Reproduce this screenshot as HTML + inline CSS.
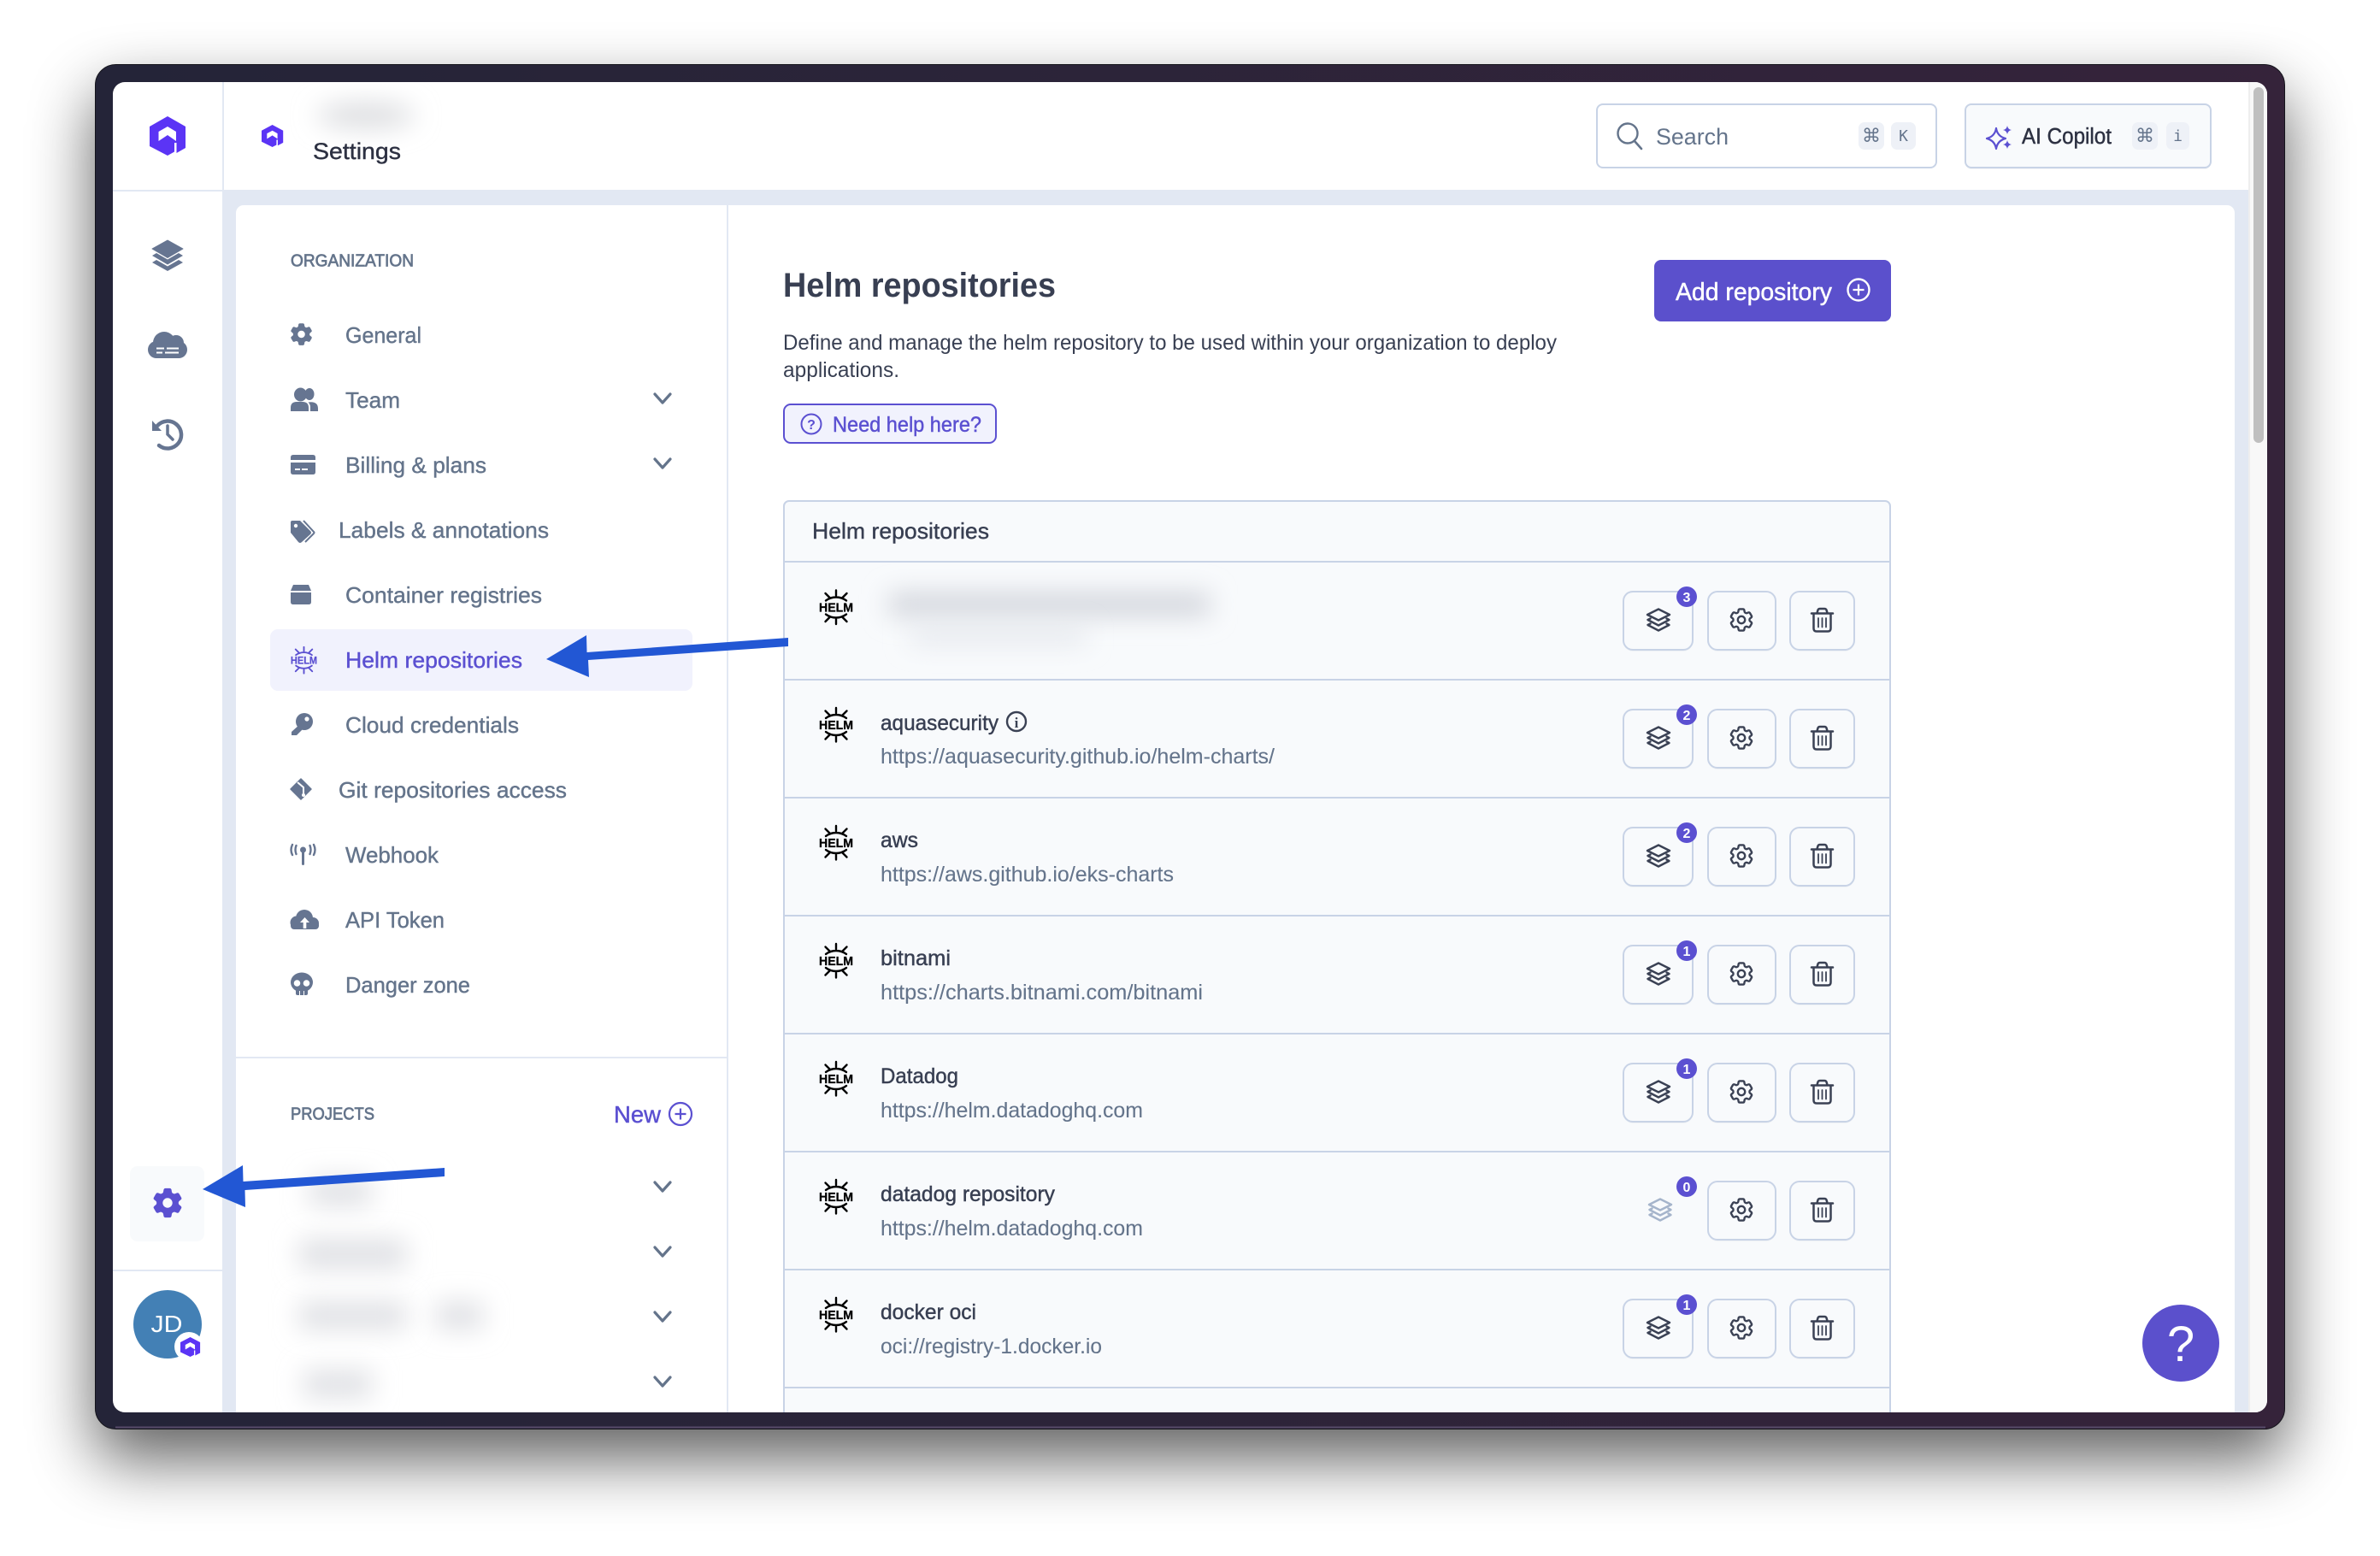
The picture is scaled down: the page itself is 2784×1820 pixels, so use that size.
<!DOCTYPE html>
<html lang="en"><head><meta charset="utf-8"><title>Helm repositories</title>
<style>
html,body{margin:0;padding:0;background:#fff;width:2784px;height:1820px;overflow:hidden}
svg{display:block}
text{font-family:"Liberation Sans","DejaVu Sans",sans-serif}
.menu{font-size:26px;fill:#64748b;stroke:#64748b;stroke-width:.4}
.sec{font-size:20.5px;fill:#64748b;stroke:#64748b;stroke-width:.75}
.name{font-size:25px;fill:#383f52;stroke:#383f52;stroke-width:.45}
.url{font-size:25px;fill:#64748b;stroke:#64748b;stroke-width:.1}
.num{font-size:16px;font-weight:700;fill:#fff;text-anchor:middle}
.kbd{font-size:18px;fill:#64748b;text-anchor:middle;font-family:"DejaVu Sans Mono","Liberation Mono",monospace}
.cmd{font-size:22px;fill:#64748b;text-anchor:middle;font-family:"DejaVu Sans","Liberation Mono",monospace}
.hl{font-size:15px;font-weight:700;stroke-width:.3}
</style></head><body>
<svg xmlns="http://www.w3.org/2000/svg" width="2784" height="1820" viewBox="0 0 2784 1820">
<defs>
<linearGradient id="fr" x1="0" x2="1" y1="0" y2="0"><stop offset="0" stop-color="#242438"/><stop offset="1" stop-color="#35233a"/></linearGradient>
<filter id="sh" filterUnits="userSpaceOnUse" x="-200" y="-200" width="3200" height="2300"><feGaussianBlur stdDeviation="38"/></filter>
<filter id="bl" x="-80%" y="-300%" width="260%" height="700%"><feGaussianBlur stdDeviation="15"/></filter>
<clipPath id="scr"><rect x="132" y="96" width="2520" height="1556" rx="14"/></clipPath>
<path id="gear" d="M9.594 3.94c.09-.542.56-.94 1.11-.94h2.593c.55 0 1.02.398 1.11.94l.213 1.281c.063.374.313.686.645.87.074.04.147.083.22.127.325.196.72.257 1.075.124l1.217-.456a1.125 1.125 0 0 1 1.37.49l1.296 2.247a1.125 1.125 0 0 1-.26 1.431l-1.003.827c-.293.241-.438.613-.43.992a7.723 7.723 0 0 1 0 .255c-.008.378.137.75.43.991l1.004.827c.424.35.534.955.26 1.43l-1.298 2.247a1.125 1.125 0 0 1-1.369.491l-1.217-.456c-.355-.133-.75-.072-1.076.124a6.47 6.47 0 0 1-.22.128c-.331.183-.581.495-.644.869l-.213 1.281c-.09.543-.56.94-1.11.94h-2.594c-.55 0-1.019-.398-1.11-.94l-.213-1.281c-.062-.374-.312-.686-.644-.87a6.52 6.52 0 0 1-.22-.127c-.325-.196-.72-.257-1.076-.124l-1.217.456a1.125 1.125 0 0 1-1.369-.49l-1.297-2.247a1.125 1.125 0 0 1 .26-1.431l1.004-.827c.292-.24.437-.613.43-.991a6.932 6.932 0 0 1 0-.255c.007-.38-.138-.751-.43-.992l-1.004-.827a1.125 1.125 0 0 1-.26-1.43l1.297-2.247a1.125 1.125 0 0 1 1.37-.491l1.216.456c.356.133.751.072 1.076-.124.072-.044.146-.086.22-.128.332-.183.582-.495.644-.869l.214-1.28ZM15 12a3 3 0 1 1-6 0 3 3 0 0 1 6 0Z"/>
<path id="logo" fill-rule="evenodd" d="M21 0 42 12V37L31.500 43V31H29V41.500L21 46 0 35V12ZM21 12 31 18V29L21 22 10.500 29V18Z"/>
<g id="wheel" fill="none" stroke-width="2.4" stroke-linecap="round">
<path d="M-12-7.500A20 20 0 0 1 12-7.500M0-19.500V-13.500M-12.500-16-7.500-11M12.500-16 7.500-11"/>
<path d="M-12 8.500A20 20 0 0 0 12 8.500M0 20V14M-12.500 17-7.500 12M12.500 17 7.500 12"/>
</g>
<g id="lay" fill="none" stroke-width="2.400" stroke-linejoin="round" stroke-linecap="round">
<path d="M14 1.500 27 8 14 14.500 1 8Z"/>
<path d="M4.500 12.500 1.500 14 14 20.500 26.500 14 23.500 12.500"/>
<path d="M4.500 18.500 1.500 20 14 26.500 26.500 20 23.500 18.500"/>
</g>
<g id="row">
<rect x="1998" y="37" width="79" height="68" rx="11" fill="#64748b" opacity=".06"/>
<rect x="2094" y="37" width="75" height="68" rx="11" fill="#64748b" opacity=".06"/>
<rect x="1998" y="35" width="79" height="68" rx="11" fill="#f8fafc" stroke="#c8d3e6" stroke-width="2"/>
<rect x="2094" y="35" width="75" height="68" rx="11" fill="#f8fafc" stroke="#c8d3e6" stroke-width="2"/>
<use href="#gear" transform="translate(2020.200 51.200) scale(1.4)" fill="none" stroke="#3a4154" stroke-width="1.700"/>
<g transform="translate(-1 0)" fill="none" stroke="#3a4154" stroke-width="2.500" stroke-linejoin="round" stroke-linecap="round">
<path d="M2120 60.500H2145M2126.500 60 2127.500 56.500Q2128 55 2130 55H2135Q2137 55 2137.500 56.500L2138.500 60"/>
<path d="M2122.500 61V78Q2122.500 81.500 2126 81.500H2139Q2142.500 81.500 2142.500 78V61"/>
<path stroke-width="1.800" d="M2128 66V76.500M2132.500 66V76.500M2137 66V76.500"/>
</g>
</g>
<g id="lb">
<rect x="1899" y="37" width="81" height="68" rx="11" fill="#64748b" opacity=".06"/>
<rect x="1899" y="35" width="81" height="68" rx="11" fill="#f8fafc" stroke="#c8d3e6" stroke-width="2"/>
<use href="#lay" x="1926" y="54" stroke="#3a4154"/>
</g>
</defs>

<!-- page and device -->
<rect width="2784" height="1820" fill="#fff"/>
<rect x="111" y="110" width="2562" height="1597" rx="24" fill="#000" opacity=".62" filter="url(#sh)"/>
<rect x="111.500" y="75.500" width="2561" height="1596" rx="24" fill="url(#fr)" stroke="#15151c" stroke-width="1"/>
<path d="M135 1669.500H2650" stroke="#564a68" stroke-width="2"/>

<g clip-path="url(#scr)">
<rect x="132" y="96" width="2520" height="1556" fill="#fff"/>
<rect x="260" y="222" width="2370" height="1430" fill="#e2e8f3"/>
<rect x="260" y="96" width="2" height="126" fill="#e2e8f3"/>
<rect x="132" y="222" width="128" height="2" fill="#e2e8f3"/>
<rect x="132" y="1485" width="128" height="2" fill="#e2e8f3"/>
<rect x="276" y="240" width="2338" height="1440" rx="9" fill="#fff"/>
<rect x="850" y="240" width="2" height="1412" fill="#e2e8f3"/>
<rect x="276" y="1236" width="574" height="2" fill="#e2e8f3"/>
<rect x="2630" y="96" width="22" height="1556" fill="#f8f8f8"/>
<rect x="2630" y="96" width="2" height="1556" fill="#eeeeee"/>
<rect x="2636" y="102" width="12" height="416" rx="6" fill="#bfbfbf"/>

<!-- header -->
<use href="#logo" transform="translate(175 136)" fill="#5b34f5"/>
<use href="#logo" transform="translate(306 146) scale(.6 .565)" fill="#5b34f5"/>
<ellipse cx="428" cy="135" rx="58" ry="15" fill="#dcdde0" filter="url(#bl)"/>
<text x="366" y="186" font-size="27" fill="#2d3142" stroke="#2d3142" stroke-width=".4" textLength="103" lengthAdjust="spacingAndGlyphs">Settings</text>

<!-- search -->
<rect x="1868" y="122" width="397" height="74" rx="7" fill="#fff" stroke="#c8d3e6" stroke-width="2"/>
<circle cx="1904" cy="156" r="11.500" fill="none" stroke="#64748b" stroke-width="2.400"/>
<path d="M1912 165 1920 174" stroke="#64748b" stroke-width="2.600" stroke-linecap="round"/>
<text x="1937" y="169" font-size="27" fill="#64748b" textLength="85" lengthAdjust="spacingAndGlyphs">Search</text>
<rect x="2174" y="143" width="30" height="32" rx="7" fill="#eef1f7"/>
<rect x="2212" y="143" width="29" height="32" rx="7" fill="#eef1f7"/>
<text class="cmd" x="2189" y="166">⌘</text><text class="kbd" x="2226.500" y="165">K</text>

<!-- copilot -->
<rect x="2299" y="124" width="287" height="74" rx="7" fill="#64748b" opacity=".07"/>
<rect x="2299" y="122" width="287" height="74" rx="7" fill="#f8fafc" stroke="#c8d3e6" stroke-width="2"/>
<path d="M2335 150Q2336.500 159.500 2346 162 2336.500 164.500 2335 174 2333.500 164.500 2324 162 2333.500 159.500 2335 150Z" fill="none" stroke="#5b50d1" stroke-width="2.200" stroke-linejoin="round"/>
<path d="M2348 147Q2348.800 151.500 2353 152 2348.800 152.800 2348 157 2347.200 152.800 2343 152 2347.200 151.500 2348 147ZM2348 164Q2348.800 168.500 2353 169 2348.800 169.800 2348 174 2347.200 169.800 2343 169 2347.200 168.500 2348 164Z" fill="#5b50d1"/>
<text x="2365" y="168" font-size="25.500" fill="#2d3142" stroke="#2d3142" stroke-width=".45" textLength="105" lengthAdjust="spacingAndGlyphs">AI Copilot</text>
<rect x="2494" y="143" width="30" height="32" rx="7" fill="#eef1f7"/>
<rect x="2534" y="143" width="27" height="32" rx="7" fill="#eef1f7"/>
<text class="cmd" x="2509" y="166">⌘</text><text class="kbd" x="2547.500" y="165">i</text>

<!-- rail -->
<g fill="#667591">
<path d="M196 281 214 291 196 301.500 178 291Z" stroke="#667591" stroke-linejoin="round"/>
<path d="M183 296 196 303.500 209 296 214 299 196 309.500 178 299Z"/>
<path d="M183 304 196 311.500 209 304 214 307 196 317 178 307Z"/>
<circle cx="192" cy="401" r="13"/><circle cx="206" cy="401" r="9"/>
<rect x="173" y="399" width="46" height="20" rx="10"/>
<path d="M183 406.500H192V408.500H183ZM195 406.500H209V408.500H195ZM183 411.500H190V413.500H183ZM193 411.500H209V413.500H193Z" fill="#fff"/>
<path d="M178 492V504H189Z"/>
</g>
<path d="M184 498A16 16 0 1 1 186 521" fill="none" stroke="#667591" stroke-width="4.500" stroke-linecap="round"/>
<path d="M196 498V508L202 514" fill="none" stroke="#667591" stroke-width="3.500" stroke-linecap="round"/>
<rect x="152" y="1364" width="87" height="88" rx="9" fill="#f8fafc"/>
<use href="#gear" transform="translate(173.200 1384.200) scale(1.9)" fill="#5b50d1" fill-rule="evenodd"/>
<circle cx="196" cy="1549" r="40" fill="#4380b5"/>
<text x="176.500" y="1558" font-size="28" fill="#fff" textLength="37" lengthAdjust="spacingAndGlyphs">JD</text>
<circle cx="221" cy="1575" r="17" fill="#fff"/>
<use href="#logo" transform="translate(211 1564) scale(.55 .5)" fill="#5b34f5"/>

<!-- sidebar -->
<text class="sec" x="340" y="311.500" textLength="144" lengthAdjust="spacingAndGlyphs">ORGANIZATION</text>
<rect x="316" y="736" width="494" height="72" rx="9" fill="#f1f2fd"/>
<text class="menu" x="404" y="401" textLength="89" lengthAdjust="spacingAndGlyphs">General</text>
<text class="menu" x="404" y="477" textLength="64" lengthAdjust="spacingAndGlyphs">Team</text>
<text class="menu" x="404" y="553" textLength="165" lengthAdjust="spacingAndGlyphs">Billing &amp; plans</text>
<text class="menu" x="396" y="629" textLength="246" lengthAdjust="spacingAndGlyphs">Labels &amp; annotations</text>
<text class="menu" x="404" y="705" textLength="230" lengthAdjust="spacingAndGlyphs">Container registries</text>
<text class="menu" x="404" y="781" textLength="207" lengthAdjust="spacingAndGlyphs" style="fill:#5b50d1;stroke:#5b50d1">Helm repositories</text>
<text class="menu" x="404" y="857" textLength="203" lengthAdjust="spacingAndGlyphs">Cloud credentials</text>
<text class="menu" x="396" y="933" textLength="267" lengthAdjust="spacingAndGlyphs">Git repositories access</text>
<text class="menu" x="404" y="1009" textLength="109" lengthAdjust="spacingAndGlyphs">Webhook</text>
<text class="menu" x="404" y="1085" textLength="116" lengthAdjust="spacingAndGlyphs">API Token</text>
<text class="menu" x="404" y="1161" textLength="146" lengthAdjust="spacingAndGlyphs">Danger zone</text>

<g fill="#667591">
<use href="#gear" transform="translate(335.500 374) scale(1.42)" fill-rule="evenodd"/>
<!-- team -->
<ellipse cx="351.500" cy="461.500" rx="7.500" ry="8"/><ellipse cx="362" cy="461" rx="5.500" ry="7"/>
<path d="M340 481V477Q340 470 347 470H354Q361 470 361 477V481Z"/><path d="M363 481V476Q363 473 360.500 470.500Q372 469 372 478V481Z"/>
<!-- billing -->
<path fill-rule="evenodd" d="M343 532H366Q369 532 369 535V538H340V535Q340 532 343 532ZM340 541H369V552Q369 555 366 555H343Q340 555 340 552ZM345 548V550H351V548ZM353 548V550H360V548Z"/>
<!-- labels -->
<path d="M340 611Q340 609 342 609H351L363 621Q365 623 363 625L353 634Q351 636 349 634L340 623Z"/>
<path d="M355 609 367 622Q368 623 367 624L357 634" fill="none" stroke="#667591" stroke-width="2"/>
<circle cx="346" cy="615" r="2.200" fill="#fff"/>
<!-- container -->
<path d="M343 684H361L364 691H340ZM340 693H364V704Q364 707 361 707H343Q340 707 340 704Z"/>
<!-- key -->
<circle cx="356" cy="844" r="10"/><path d="M351 847 341 856V860H347L356 851Z"/><circle cx="359" cy="841" r="2.600" fill="#fff"/>
<!-- git -->
<path d="M352 911 364 923 352 935 340 923Z" stroke="#667591" stroke-width="1.500" stroke-linejoin="round"/>
<path d="M348 915 355 921V930" fill="none" stroke="#fff" stroke-width="2"/>
<circle cx="355" cy="930" r="2" fill="#fff"/>
<!-- webhook -->
<circle cx="354.500" cy="994" r="3.500"/><rect x="353" y="994" width="3" height="18" rx="1.500"/>
<!-- api -->
<circle cx="356" cy="1074" r="10"/><circle cx="347" cy="1079" r="7.500"/><circle cx="366" cy="1080" r="7"/><rect x="340" y="1078" width="33" height="9" rx="4"/>
<path d="M356.500 1073 351 1079H354.700V1086H358.300V1079H362Z" fill="#fff"/>
<!-- skull -->
<ellipse cx="353" cy="1149" rx="13" ry="11.500"/><rect x="346" y="1152" width="14" height="12" rx="2"/>
<circle cx="347.500" cy="1150" r="3.800" fill="#fff"/><circle cx="358.500" cy="1150" r="3.800" fill="#fff"/>
<path d="M350.500 1159V1164M355.500 1159V1164" stroke="#fff" stroke-width="1"/>
</g>
<path d="M342 988Q339 994 342 1000M346.500 989Q344.500 994 346.500 999M367 988Q370 994 367 1000M362.500 989Q364.500 994 362.500 999" fill="none" stroke="#667591" stroke-width="2.400" stroke-linecap="round"/>

<g transform="translate(355.500 772) scale(.78)">
<use href="#wheel" stroke="#5b50d1"/>
<text class="hl" x="-20" y="5.500" fill="#5b50d1" stroke="#5b50d1" textLength="40" lengthAdjust="spacingAndGlyphs">HELM</text>
</g>

<g fill="none" stroke="#64748b" stroke-width="3.200" stroke-linecap="round" stroke-linejoin="round">
<path d="M766 461 775 471 784 461M766 537 775 547 784 537M766 1383 775 1393 784 1383M766 1459 775 1469 784 1459M766 1535 775 1545 784 1535M766 1611 775 1621 784 1611"/>
</g>

<text class="sec" x="340" y="1309.500" textLength="98" lengthAdjust="spacingAndGlyphs">PROJECTS</text>
<text x="718" y="1313" font-size="28" fill="#5b50d1" stroke="#5b50d1" stroke-width=".45" textLength="55" lengthAdjust="spacingAndGlyphs">New</text>
<circle cx="796" cy="1303" r="13" fill="none" stroke="#5b50d1" stroke-width="2.200"/>
<path d="M796 1296.500V1309.500M789.500 1303H802.500" stroke="#5b50d1" stroke-width="2.200"/>

<g fill="#dfe0e4" filter="url(#bl)"><rect x="362" y="1378" width="72" height="32"/></g>
<g fill="#dfe0e4" filter="url(#bl)"><rect x="350" y="1450" width="125" height="34"/></g>
<g fill="#dfe0e4" filter="url(#bl)"><rect x="350" y="1523" width="125" height="32"/></g>
<g fill="#dfe0e4" filter="url(#bl)"><rect x="510" y="1523" width="55" height="32"/></g>
<g fill="#dfe0e4" filter="url(#bl)"><rect x="355" y="1603" width="80" height="32"/></g>

<!-- main -->
<text x="916" y="347" font-size="40" font-weight="700" fill="#383f52" textLength="319" lengthAdjust="spacingAndGlyphs">Helm repositories</text>
<text x="916" y="409" font-size="25" fill="#383f52" textLength="905" lengthAdjust="spacingAndGlyphs">Define and manage the helm repository to be used within your organization to deploy</text>
<text x="916" y="441" font-size="25" fill="#383f52" textLength="136" lengthAdjust="spacingAndGlyphs">applications.</text>
<rect x="917" y="473" width="248" height="45" rx="8" fill="#f1f2fd" stroke="#5b50d1" stroke-width="2"/>
<circle cx="949" cy="496" r="11.500" fill="none" stroke="#5b50d1" stroke-width="2"/>
<text x="949" y="502" font-size="16" font-weight="700" fill="#5b50d1" text-anchor="middle">?</text>
<text x="974" y="505" font-size="25" fill="#5b50d1" stroke="#5b50d1" stroke-width=".45" textLength="174" lengthAdjust="spacingAndGlyphs">Need help here?</text>
<rect x="1935" y="304" width="277" height="72" rx="8" fill="#5b50cc"/>
<text x="1960" y="351" font-size="29" fill="#fff" stroke="#fff" stroke-width=".45" textLength="183" lengthAdjust="spacingAndGlyphs">Add repository</text>
<circle cx="2174" cy="339" r="12.500" fill="none" stroke="#fff" stroke-width="2.400"/>
<path d="M2174 332.500V345.500M2167.500 339H2180.500" stroke="#fff" stroke-width="2.200"/>

<!-- table -->
<rect x="917" y="586" width="1294" height="1100" rx="6" fill="#f8fafc" stroke="#c8d3e6" stroke-width="2"/>
<text x="950" y="630" font-size="26" fill="#383f52" stroke="#383f52" stroke-width=".4" textLength="207" lengthAdjust="spacingAndGlyphs">Helm repositories</text>
<g fill="#c8d3e6">
<rect x="916" y="656" width="1296" height="2"/><rect x="916" y="794" width="1296" height="2"/><rect x="916" y="932" width="1296" height="2"/><rect x="916" y="1070" width="1296" height="2"/><rect x="916" y="1208" width="1296" height="2"/><rect x="916" y="1346" width="1296" height="2"/><rect x="916" y="1484" width="1296" height="2"/><rect x="916" y="1622" width="1296" height="2"/>
</g>

<!-- row 1 -->
<g fill="#d0d3da" filter="url(#bl)"><rect x="1040" y="694" width="375" height="26"/></g>
<g fill="#e0e3e9" filter="url(#bl)"><rect x="1065" y="736" width="205" height="16"/></g>
<g transform="translate(978 710)"><use href="#wheel" stroke="#000"/><text class="hl" x="-20" y="5.500" fill="#000" stroke="#000" textLength="40" lengthAdjust="spacingAndGlyphs">HELM</text></g>
<use href="#row" y="657"/><use href="#lb" y="657"/>
<circle cx="1973" cy="698" r="12" fill="#5b50d1"/><text class="num" x="1973" y="704">3</text>

<!-- row 2 -->
<g transform="translate(978 847.500)"><use href="#wheel" stroke="#000"/><text class="hl" x="-20" y="5.500" fill="#000" stroke="#000" textLength="40" lengthAdjust="spacingAndGlyphs">HELM</text></g>
<text class="name" x="1030" y="854" textLength="138" lengthAdjust="spacingAndGlyphs">aquasecurity</text>
<circle cx="1189" cy="844" r="11" fill="none" stroke="#3a4154" stroke-width="2.400"/>
<text x="1189" y="851" font-size="17" font-weight="700" fill="#3a4154" text-anchor="middle" style="font-family:'Liberation Serif',serif">i</text>
<text class="url" x="1030" y="893" textLength="461" lengthAdjust="spacingAndGlyphs">https://aquasecurity.github.io/helm-charts/</text>
<use href="#row" y="795"/><use href="#lb" y="795"/>
<circle cx="1973" cy="836" r="12" fill="#5b50d1"/><text class="num" x="1973" y="842">2</text>

<!-- row 3 -->
<g transform="translate(978 985.500)"><use href="#wheel" stroke="#000"/><text class="hl" x="-20" y="5.500" fill="#000" stroke="#000" textLength="40" lengthAdjust="spacingAndGlyphs">HELM</text></g>
<text class="name" x="1030" y="991" textLength="44" lengthAdjust="spacingAndGlyphs">aws</text>
<text class="url" x="1030" y="1031" textLength="343" lengthAdjust="spacingAndGlyphs">https://aws.github.io/eks-charts</text>
<use href="#row" y="933"/><use href="#lb" y="933"/>
<circle cx="1973" cy="974" r="12" fill="#5b50d1"/><text class="num" x="1973" y="980">2</text>

<!-- row 4 -->
<g transform="translate(978 1123.500)"><use href="#wheel" stroke="#000"/><text class="hl" x="-20" y="5.500" fill="#000" stroke="#000" textLength="40" lengthAdjust="spacingAndGlyphs">HELM</text></g>
<text class="name" x="1030" y="1129" textLength="82" lengthAdjust="spacingAndGlyphs">bitnami</text>
<text class="url" x="1030" y="1169" textLength="377" lengthAdjust="spacingAndGlyphs">https://charts.bitnami.com/bitnami</text>
<use href="#row" y="1071"/><use href="#lb" y="1071"/>
<circle cx="1973" cy="1112" r="12" fill="#5b50d1"/><text class="num" x="1973" y="1118">1</text>

<!-- row 5 -->
<g transform="translate(978 1261.500)"><use href="#wheel" stroke="#000"/><text class="hl" x="-20" y="5.500" fill="#000" stroke="#000" textLength="40" lengthAdjust="spacingAndGlyphs">HELM</text></g>
<text class="name" x="1030" y="1267" textLength="91" lengthAdjust="spacingAndGlyphs">Datadog</text>
<text class="url" x="1030" y="1307" textLength="307" lengthAdjust="spacingAndGlyphs">https://helm.datadoghq.com</text>
<use href="#row" y="1209"/><use href="#lb" y="1209"/>
<circle cx="1973" cy="1250" r="12" fill="#5b50d1"/><text class="num" x="1973" y="1256">1</text>

<!-- row 6 -->
<g transform="translate(978 1399.500)"><use href="#wheel" stroke="#000"/><text class="hl" x="-20" y="5.500" fill="#000" stroke="#000" textLength="40" lengthAdjust="spacingAndGlyphs">HELM</text></g>
<text class="name" x="1030" y="1405" textLength="204" lengthAdjust="spacingAndGlyphs">datadog repository</text>
<text class="url" x="1030" y="1445" textLength="307" lengthAdjust="spacingAndGlyphs">https://helm.datadoghq.com</text>
<use href="#row" y="1347"/>
<use href="#lay" x="1928" y="1401" stroke="#a5b4cb"/>
<circle cx="1973" cy="1388" r="12" fill="#5b50d1"/><text class="num" x="1973" y="1394">0</text>

<!-- row 7 -->
<g transform="translate(978 1537.500)"><use href="#wheel" stroke="#000"/><text class="hl" x="-20" y="5.500" fill="#000" stroke="#000" textLength="40" lengthAdjust="spacingAndGlyphs">HELM</text></g>
<text class="name" x="1030" y="1543" textLength="112" lengthAdjust="spacingAndGlyphs">docker oci</text>
<text class="url" x="1030" y="1583" textLength="259" lengthAdjust="spacingAndGlyphs">oci://registry-1.docker.io</text>
<use href="#row" y="1485"/><use href="#lb" y="1485"/>
<circle cx="1973" cy="1526" r="12" fill="#5b50d1"/><text class="num" x="1973" y="1532">1</text>

<!-- help -->
<circle cx="2551" cy="1571" r="45" fill="#5b50cc"/>
<text x="2551" y="1592" font-size="58" fill="#fff" text-anchor="middle">?</text>

<!-- annotation arrows -->
<path d="M639 771 686 743 686.500 763 922 746 922 756 688 772 689 792Z" fill="#2257d4"/>
<path d="M237 1391 284 1363 284.500 1382 520 1366 520 1376 286.500 1392 287 1412Z" fill="#2257d4"/>
</g>
</svg>
</body></html>
